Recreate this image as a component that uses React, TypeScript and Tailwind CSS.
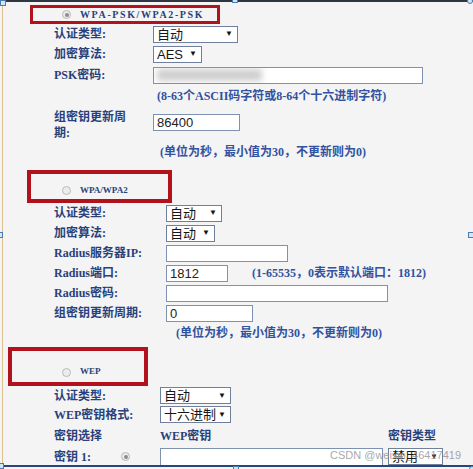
import React from 'react'

const labelFont = "font-['Liberation_Serif','Noto_Sans_CJK_SC',serif]"
const valueFont = "font-['Liberation_Sans','Noto_Sans_CJK_SC',sans-serif]"

const Label = ({ children, className = '' }: { children: React.ReactNode; className?: string }) => (
   <div className={`${labelFont} font-bold text-[12px] leading-[16px] text-[#29417a] ${className}`}>{children}</div>
)

const Hint = ({ children, className = '' }: { children: React.ReactNode; className?: string }) => (
   <div className={`${labelFont} font-bold text-[12px] leading-[16px] text-[#3152a0] ${className}`}>{children}</div>
)

const Select = ({ value, className = '' }: { value: string; className?: string }) => (
   <div
      className={`flex items-center justify-between h-[17px] bg-white border border-[#6f7f9c] pl-[3px] pr-[4px] ${valueFont} text-[13px] leading-none text-[#151515] ${className}`}
   >
      <span>{value}</span>
      <span className="text-[8px]">▼</span>
   </div>
)

const Input = ({ value, className = '', children }: { value?: string; className?: string; children?: React.ReactNode }) => (
   <div
      className={`flex items-center h-[17px] bg-white border border-[#7d91b3] pl-[3px] overflow-hidden ${valueFont} text-[13px] leading-none text-[#222] ${className}`}
   >
      {value}
      {children}
   </div>
)

const Radio = ({ checked = false }: { checked?: boolean }) => (
   <div className="flex items-center justify-center w-[9px] h-[9px] rounded-full border border-[#b9b9b9] bg-[#ececec] shrink-0">
      {checked && <div className="w-[4px] h-[4px] rounded-full bg-[#8d8d8d]" />}
   </div>
)

const Handle = ({ className }: { className: string }) => (
   <div className={`absolute w-[6px] h-[6px] bg-[#d3e6f7] border border-[#4d7cb2] ${className}`} />
)

export default function App() {
   return (
      <div className="relative w-[473px] h-[469px] bg-[#f4f4f4] overflow-hidden">
         <div className="ml-[2px] h-[467px] border-l border-l-[#dcc08f] border-t-2 border-t-[#2e3641] border-b-2 border-b-[#27467c] overflow-hidden">
            {/* WPA-PSK/WPA2-PSK */}
            <div className="ml-[27px] mt-[3px] w-[190px] h-[19px] border-[3px] border-[#b2121c] flex items-center pl-[29px]">
               <Radio checked />
               <span className={`ml-[9px] ${labelFont} font-bold text-[10px] tracking-[1.6px] text-[#29417a]`}>WPA-PSK/WPA2-PSK</span>
            </div>

            <div className="pl-[51px]">
               <div className="flex items-center h-[20px]">
                  <Label className="w-[99px]">认证类型:</Label>
                  <Select value="自动" className="w-[85px]" />
               </div>
               <div className="flex items-center h-[20px]">
                  <Label className="w-[99px]">加密算法:</Label>
                  <Select value="AES" className="w-[49px]" />
               </div>
               <div className="flex items-center h-[22px]">
                  <Label className="w-[99px]">PSK密码:</Label>
                  <Input className="w-[270px]">
                     <div className="w-[105px] h-[12px] bg-[#cfcfcf] blur-[3px]" />
                  </Input>
               </div>
               <div className="flex items-center h-[20px] pl-[103px]">
                  <Hint>(8-63个ASCII码字符或8-64个十六进制字符)</Hint>
               </div>
               <div className="flex items-center h-[34px] mt-[2px]">
                  <Label className="w-[99px]">
                     组密钥更新周
                     <br />
                     期:
                  </Label>
                  <Input value="86400" className="w-[87px] mb-[5px]" />
               </div>
               <div className="flex items-center h-[20px] pl-[106px]">
                  <Hint>(单位为秒，最小值为30，不更新则为0)</Hint>
               </div>
            </div>

            {/* WPA/WPA2 */}
            <div className="ml-[24px] mt-[8px] w-[145px] h-[33px] border-4 border-[#b2121c] flex items-center pl-[31px] pt-[8px]">
               <Radio />
               <span className={`ml-[9px] ${labelFont} font-bold text-[9px] text-[#29417a]`}>WPA/WPA2</span>
            </div>

            <div className="pl-[51px]">
               <div className="flex items-center h-[20px]">
                  <Label className="w-[112px]">认证类型:</Label>
                  <Select value="自动" className="w-[56px]" />
               </div>
               <div className="flex items-center h-[20px]">
                  <Label className="w-[112px]">加密算法:</Label>
                  <Select value="自动" className="w-[49px]" />
               </div>
               <div className="flex items-center h-[20px]">
                  <Label className="w-[112px]">Radius服务器IP:</Label>
                  <Input className="w-[122px]" />
               </div>
               <div className="flex items-center h-[20px]">
                  <Label className="w-[112px]">Radius端口:</Label>
                  <Input value="1812" className="w-[62px]" />
                  <Hint className="ml-[24px]">(1-65535，0表示默认端口：1812)</Hint>
               </div>
               <div className="flex items-center h-[20px]">
                  <Label className="w-[112px]">Radius密码:</Label>
                  <Input className="w-[222px]" />
               </div>
               <div className="flex items-center h-[20px]">
                  <Label className="w-[112px]">组密钥更新周期:</Label>
                  <Input value="0" className="w-[87px]" />
               </div>
               <div className="flex items-center h-[20px] pl-[122px]">
                  <Hint>(单位为秒，最小值为30，不更新则为0)</Hint>
               </div>
            </div>

            {/* WEP */}
            <div className="ml-[5px] mt-[4px] w-[140px] h-[39px] border-4 border-[#b2121c] flex items-center pl-[50px] pt-[11px]">
               <Radio />
               <span className={`ml-[9px] ${labelFont} font-bold text-[9px] text-[#29417a]`}>WEP</span>
            </div>

            <div className="pl-[51px]">
               <div className="flex items-center h-[19px]">
                  <Label className="w-[106px]">认证类型:</Label>
                  <Select value="自动" className="w-[71px]" />
               </div>
               <div className="flex items-center h-[19px]">
                  <Label className="w-[106px]">WEP密钥格式:</Label>
                  <Select value="十六进制" className="w-[71px]" />
               </div>
               <div className="flex items-center h-[23px]">
                  <Label className="w-[106px]">密钥选择</Label>
                  <Label className="w-[228px] text-[10px]">WEP密钥</Label>
                  <Label>密钥类型</Label>
               </div>
               <div className="flex items-center h-[19px]">
                  <div className="flex items-center w-[106px]">
                     <Label>密钥 1:</Label>
                     <div className="ml-auto mr-[30px]">
                        <Radio checked />
                     </div>
                  </div>
                  <Input className="w-[223px] h-[18px] bg-[#e7e7e7]" />
                  <Select value="禁用" className="ml-[5px] w-[55px]" />
               </div>
            </div>
         </div>

         {/* selection handles */}
         <Handle className="left-0 top-0" />
         <Handle className="left-[232px] -top-[3px]" />
         <Handle className="right-0 -top-[2px] rounded-full" />
         <Handle className="-left-[3px] top-[232px]" />
         <Handle className="-right-[1px] top-[232px]" />
         <Handle className="-left-[2px] bottom-0" />
         <Handle className="left-[233px] -bottom-[3px]" />
         <Handle className="-right-[2px] -bottom-[3px] rounded-full" />

         {/* watermark */}
         <div className={`absolute left-[330px] top-[447px] ${valueFont} text-[11px] leading-[16px] text-[#8f8f8f]/80`}>
            CSDN @weixin_46417419
         </div>
      </div>
   )
}
